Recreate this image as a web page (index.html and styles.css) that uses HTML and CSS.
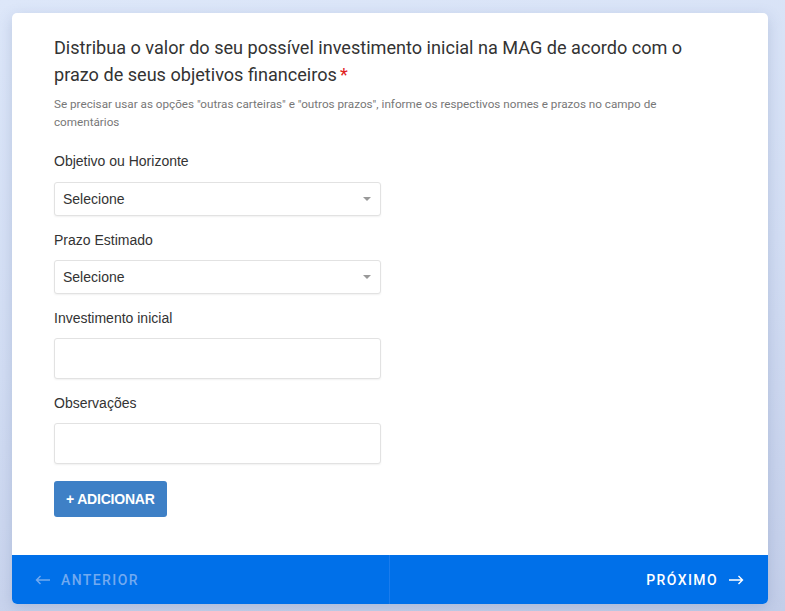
FILE: index.html
```html
<!DOCTYPE html>
<html lang="pt">
<head>
<meta charset="utf-8">
<title>Formulário</title>
<link rel="stylesheet" href="styles.css">
</head>
<body>
<div class="card">
  <div class="content">
    <h1 class="title">Distribua o valor do seu possível investimento inicial na MAG de acordo com o prazo de seus objetivos financeiros<span class="req">*</span></h1>
    <p class="desc">Se precisar usar as opções "outras carteiras" e "outros prazos", informe os respectivos nomes e prazos no campo de comentários</p>

    <label class="label">Objetivo ou Horizonte</label>
    <div class="select"><span>Selecione</span><i class="caret"></i></div>

    <label class="label">Prazo Estimado</label>
    <div class="select"><span>Selecione</span><i class="caret"></i></div>

    <label class="label">Investimento inicial</label>
    <div class="input"></div>

    <label class="label">Observações</label>
    <div class="input"></div>

    <button class="add">+ ADICIONAR</button>
  </div>
  <div class="footer">
    <div class="nav prev">
      <svg width="16" height="10" viewBox="0 0 16 10"><path d="M15 5H1.5M5.5 1L1.5 5L5.5 9" fill="none" stroke="currentColor" stroke-width="1.4"/></svg>
      <span>ANTERIOR</span>
    </div>
    <div class="nav next">
      <span>PRÓXIMO</span>
      <svg width="16" height="10" viewBox="0 0 16 10"><path d="M1 5H14.5M10.5 1L14.5 5L10.5 9" fill="none" stroke="currentColor" stroke-width="1.4"/></svg>
    </div>
  </div>
</div>
</body>
</html>
```

FILE: styles.css
```css
* { box-sizing: border-box; }
html, body { height: 100%; }
body {
  margin: 0;
  padding: 13px 17px 7px 12px;
  background: linear-gradient(170deg, #dde7f9 0%, #d2ddf3 50%, #c3cee9 100%);
  font-family: "Liberation Sans", Arial, sans-serif;
  overflow: hidden;
}
.card {
  width: 756px;
  height: 591px;
  background: #fff;
  border-radius: 5px;
  box-shadow: 0 4px 14px rgba(90, 110, 160, 0.25);
  display: flex;
  flex-direction: column;
  overflow: hidden;
}
.content {
  flex: 1;
  padding: 21px 42px 0 42px;
  display: flex;
  flex-direction: column;
  align-items: flex-start;
}
.title {
  margin: 0;
  font-family: Roboto, sans-serif;
  font-weight: 400;
  font-size: 18.1px;
  line-height: 27px;
  color: #333;
  width: 650px;
}
.req { color: #e02020; padding-left: 3px; }
.desc {
  margin: 7px 0 0 0;
  font-family: Roboto, sans-serif;
  font-size: 11.7px;
  line-height: 18px;
  color: #777;
  width: 625px;
}
.label {
  display: block;
  font-size: 14px;
  line-height: 20px;
  color: #333;
  margin-top: 14px;
  margin-bottom: 10px;
}
.desc + .label { margin-top: 20px; margin-bottom: 11px; }
.select, .input {
  width: 327px;
  background: #fff;
  border: 1px solid #e2e2e2;
  border-radius: 3px;
  box-shadow: 0 1px 2px rgba(0,0,0,0.06);
}
.select {
  height: 34px;
  display: flex;
  align-items: center;
  justify-content: space-between;
  padding: 0 9px 0 8px;
  font-size: 14px;
  color: #333;
}
.caret {
  width: 0; height: 0;
  border-left: 4px solid transparent;
  border-right: 4px solid transparent;
  border-top: 4px solid #999;
}
.input { height: 41px; }
.add {
  margin-top: 17px;
  height: 36px;
  padding: 0 12px;
  background: #3e80c6;
  border: none;
  border-radius: 3px;
  color: #fff;
  font-family: "Liberation Sans", Arial, sans-serif;
  font-weight: 700;
  font-size: 14px;
  letter-spacing: -0.2px;
}
.footer {
  height: 49px;
  background: #0070e9;
  display: flex;
}
.nav {
  flex: 1;
  display: flex;
  align-items: center;
  gap: 10px;
  font-family: Roboto, sans-serif;
  font-weight: 500;
  font-size: 14px;
  letter-spacing: 1.4px;
}
.prev {
  color: #72aaf0;
  padding-left: 23px;
  border-right: 1px solid #1a7ced;
}
.next {
  color: #fff;
  justify-content: flex-end;
  padding-right: 24px;
}
```
